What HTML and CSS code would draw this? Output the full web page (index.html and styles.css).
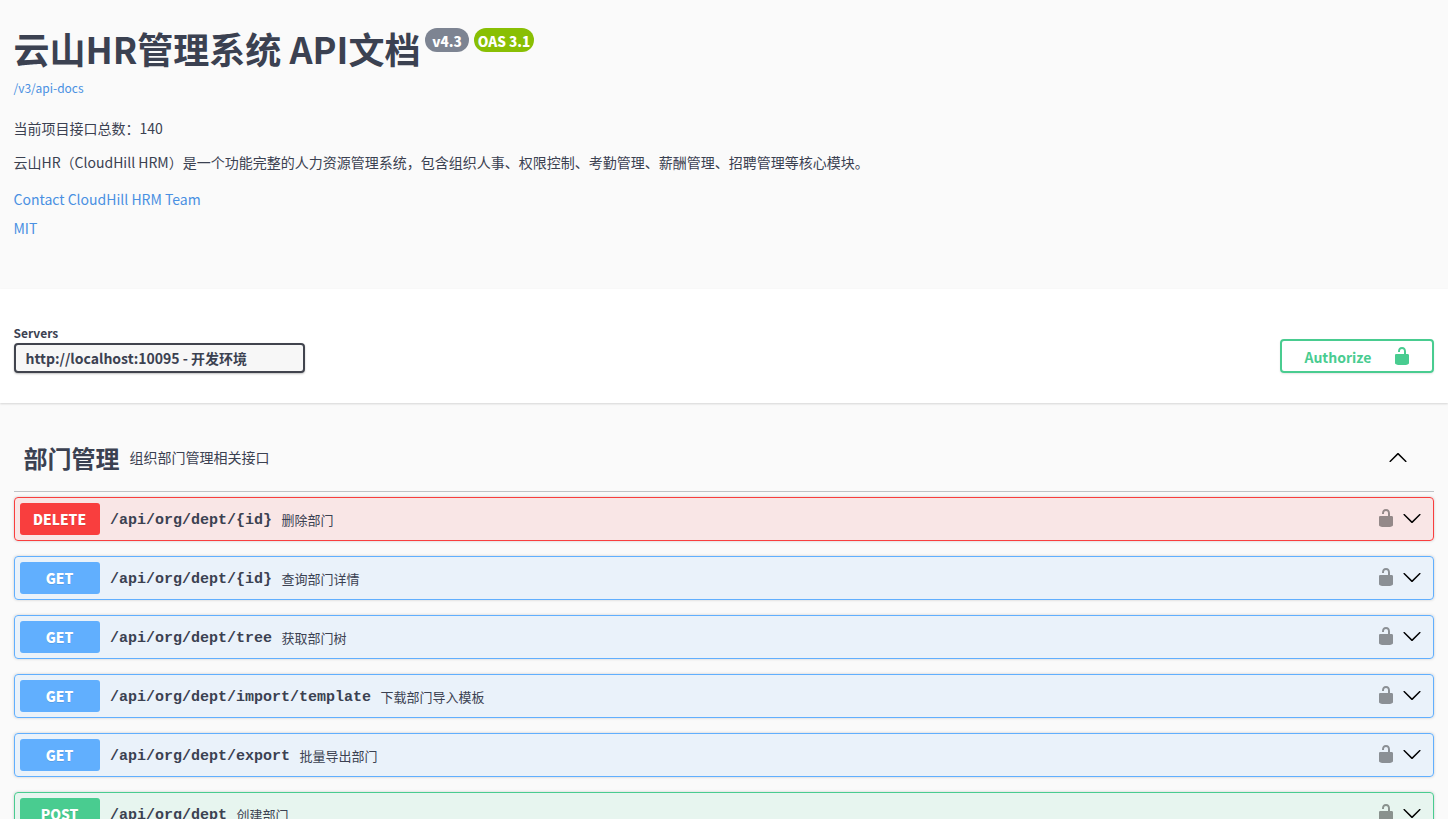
FILE: index.html
```html
<!DOCTYPE html>
<html lang="zh-CN">
<head>
  <meta charset="UTF-8">
  <title>云山HR管理系统 API文档</title>
  <meta name="viewport" content="width=device-width, initial-scale=1.0">
  <link rel="stylesheet" href="styles.css">
</head>
<body>
  <svg class="icon-defs" xmlns="http://www.w3.org/2000/svg">
    <symbol id="unlocked" viewBox="0 0 20 20">
      <path d="M15.8 8H14V5.6C14 2.703 12.665 1 10 1 7.334 1 6 2.703 6 5.6V6h2v-.801C8 3.754 8.797 3 10 3c1.203 0 2 .754 2 2.199V8H4c-.553 0-1 .646-1 1.199V17c0 .549.428 1.139.951 1.307l1.197.387C5.672 18.861 6.55 19 7.1 19h5.8c.549 0 1.428-.139 1.951-.307l1.196-.387c.524-.167.953-.757.953-1.306V9.199C17 8.646 16.352 8 15.8 8z"/>
    </symbol>
    <symbol id="arrow-up" viewBox="0 0 20 20">
      <path d="M17.418 14.908c.272.268.709.268.979 0s.271-.701 0-.969l-7.908-7.83c-.27-.268-.707-.268-.979 0l-7.908 7.83c-.27.268-.271.701 0 .969.271.268.709.268.979 0L10 7.767l7.418 7.141z"/>
    </symbol>
    <symbol id="arrow-down" viewBox="0 0 20 20">
      <path d="M17.418 6.109c.272-.268.709-.268.979 0s.271.701 0 .969l-7.908 7.83c-.27.268-.707.268-.979 0l-7.908-7.83c-.27-.268-.271-.701 0-.969.271-.268.709-.268.979 0L10 13.25l7.418-7.141z"/>
    </symbol>
  </svg>

  <header class="info">
    <div class="title-row">
      <h1 class="title">云山HR管理系统 API文档</h1>
      <span class="version">v4.3</span>
      <span class="version oas">OAS 3.1</span>
    </div>
    <a class="docs-link" href="#">/v3/api-docs</a>
    <div class="description">
      <p>当前项目接口总数：140</p>
      <p>云山HR（CloudHill HRM）是一个功能完整的人力资源管理系统，包含组织人事、权限控制、考勤管理、薪酬管理、招聘管理等核心模块。</p>
    </div>
    <a class="info-link" href="#">Contact CloudHill HRM Team</a>
    <a class="info-link" href="#">MIT</a>
  </header>

  <section class="scheme">
    <div class="servers">
      <label class="servers-title" for="servers">Servers</label>
      <select class="servers-select" id="servers">
        <option>http://localhost:10095 - 开发环境</option>
      </select>
    </div>
    <button class="authorize"><span>Authorize</span><svg class="icon"><use href="#unlocked"/></svg></button>
  </section>

  <main class="operations">
    <div class="tag">
      <h3 class="tag-name">部门管理</h3>
      <span class="tag-desc">组织部门管理相关接口</span>
      <svg class="icon"><use href="#arrow-up"/></svg>
    </div>

    <div class="opblock delete">
      <span class="method">DELETE</span>
      <span class="path">/api/org/dept/{id}</span>
      <span class="summary">删除部门</span>
      <svg class="icon lock"><use href="#unlocked"/></svg>
      <svg class="icon"><use href="#arrow-down"/></svg>
    </div>
    <div class="opblock get">
      <span class="method">GET</span>
      <span class="path">/api/org/dept/{id}</span>
      <span class="summary">查询部门详情</span>
      <svg class="icon lock"><use href="#unlocked"/></svg>
      <svg class="icon"><use href="#arrow-down"/></svg>
    </div>
    <div class="opblock get">
      <span class="method">GET</span>
      <span class="path">/api/org/dept/tree</span>
      <span class="summary">获取部门树</span>
      <svg class="icon lock"><use href="#unlocked"/></svg>
      <svg class="icon"><use href="#arrow-down"/></svg>
    </div>
    <div class="opblock get">
      <span class="method">GET</span>
      <span class="path">/api/org/dept/import/template</span>
      <span class="summary">下载部门导入模板</span>
      <svg class="icon lock"><use href="#unlocked"/></svg>
      <svg class="icon"><use href="#arrow-down"/></svg>
    </div>
    <div class="opblock get">
      <span class="method">GET</span>
      <span class="path">/api/org/dept/export</span>
      <span class="summary">批量导出部门</span>
      <svg class="icon lock"><use href="#unlocked"/></svg>
      <svg class="icon"><use href="#arrow-down"/></svg>
    </div>
    <div class="opblock post">
      <span class="method">POST</span>
      <span class="path">/api/org/dept</span>
      <span class="summary">创建部门</span>
      <svg class="icon lock"><use href="#unlocked"/></svg>
      <svg class="icon"><use href="#arrow-down"/></svg>
    </div>
  </main>
</body>
</html>
```

FILE: styles.css
```css
* {
  box-sizing: border-box;
}

body {
  margin: 0;
  height: 100vh;
  overflow: hidden;
  background: #fafafa;
  color: #3b4151;
  font-family: "Noto Sans CJK SC", sans-serif;
}

.icon-defs {
  display: none;
}

.icon {
  width: 20px;
  height: 20px;
  flex-shrink: 0;
}

.info {
  height: 289px;
  padding: 22px 13.5px 0;
}

.title-row {
  display: flex;
  align-items: flex-start;
}

.title {
  margin: 0 4.5px 0 0;
  font-size: 36px;
  line-height: 52px;
  font-weight: 700;
}

.version {
  width: 44px;
  height: 24px;
  margin: 6px 5px 0 0;
  border-radius: 57px;
  background: #7d8492;
  color: #fff;
  font-size: 13.6px;
  line-height: 26px;
  font-weight: 900;
  text-align: center;
  white-space: nowrap;
}

.oas {
  width: 60px;
  background: #89bf04;
}

.docs-link,
.info-link {
  display: block;
  color: #4990e2;
  text-decoration: none;
}

.docs-link {
  margin-top: 5px;
  font-size: 12px;
  line-height: 18px;
}

.description {
  margin-top: 21px;
  font-size: 14px;
}

.description p {
  margin: 0 0 14px;
  line-height: 20px;
}

.info-link {
  margin-top: 5px;
  font-size: 14px;
  line-height: 24px;
}

.description + .info-link {
  margin-top: 15px;
}

.scheme {
  display: flex;
  justify-content: space-between;
  align-items: flex-end;
  height: 114px;
  padding: 0 14px 30px;
  background: #fff;
  box-shadow: 0 1px 2px rgba(0, 0, 0, .15);
}

.servers {
  display: flex;
  flex-direction: column;
}

.servers-title {
  margin: 0 0 1px -.5px;
  font-size: 12px;
  line-height: 18px;
  font-weight: 700;
}

.servers-select {
  appearance: none;
  width: 291px;
  height: 30px;
  padding: 0 9.5px;
  border: 2px solid #41444e;
  border-radius: 4px;
  background: #f7f7f7;
  box-shadow: 0 1px 2px rgba(0, 0, 0, .25);
  color: #3b4151;
  font: 700 14px "Noto Sans CJK SC", sans-serif;
}

.authorize {
  display: flex;
  align-items: center;
  justify-content: space-between;
  width: 154px;
  height: 34px;
  padding: 0 20px 0 22.5px;
  border: 2px solid #49cc90;
  border-radius: 4px;
  background: transparent;
  box-shadow: 0 1px 2px rgba(0, 0, 0, .1);
  color: #49cc90;
  fill: #49cc90;
  font: 700 14px "Noto Sans CJK SC", sans-serif;
}

.authorize span {
  padding-top: 2px;
}

.operations {
  padding: 22px 14px 0;
}

.tag {
  display: flex;
  align-items: center;
  height: 67px;
  margin-bottom: 5px;
  padding: 0 26px 2px 9.5px;
  border-bottom: 1px solid rgba(59, 65, 81, .3);
}

.tag-name {
  margin: 0;
  font-size: 24px;
  font-weight: 700;
}

.tag-desc {
  flex: 1;
  padding: 0 10px;
  font-size: 14px;
}

.opblock {
  display: flex;
  align-items: center;
  height: 44px;
  margin-bottom: 15px;
  padding: 0 11px 0 5px;
  border: 1px solid;
  border-radius: 4px;
  box-shadow: 0 0 3px rgba(0, 0, 0, .19);
}

.opblock .icon {
  margin-bottom: 2px;
}

.method {
  width: 80px;
  height: 32px;
  padding-right: 1px;
  border-radius: 3px;
  color: #fff;
  font-size: 13.8px;
  line-height: 33px;
  font-weight: 900;
  text-align: center;
  text-shadow: 0 1px 0 rgba(0, 0, 0, .1);
}

.path {
  padding: 2px 9.5px 0 10px;
  font-family: "Liberation Mono", monospace;
  font-size: 15px;
  font-weight: 700;
}

.summary {
  flex: 1;
  font-size: 13px;
}

.opblock .lock {
  margin-right: 6px;
  opacity: .4;
}

.delete {
  border-color: #f93e3e;
  background: rgba(249, 62, 62, .1);
}

.delete .method {
  background: #f93e3e;
}

.get {
  border-color: #61affe;
  background: rgba(97, 175, 254, .1);
}

.get .method {
  background: #61affe;
}

.post {
  border-color: #49cc90;
  background: rgba(73, 204, 144, .1);
}

.post .method {
  background: #49cc90;
}
```
